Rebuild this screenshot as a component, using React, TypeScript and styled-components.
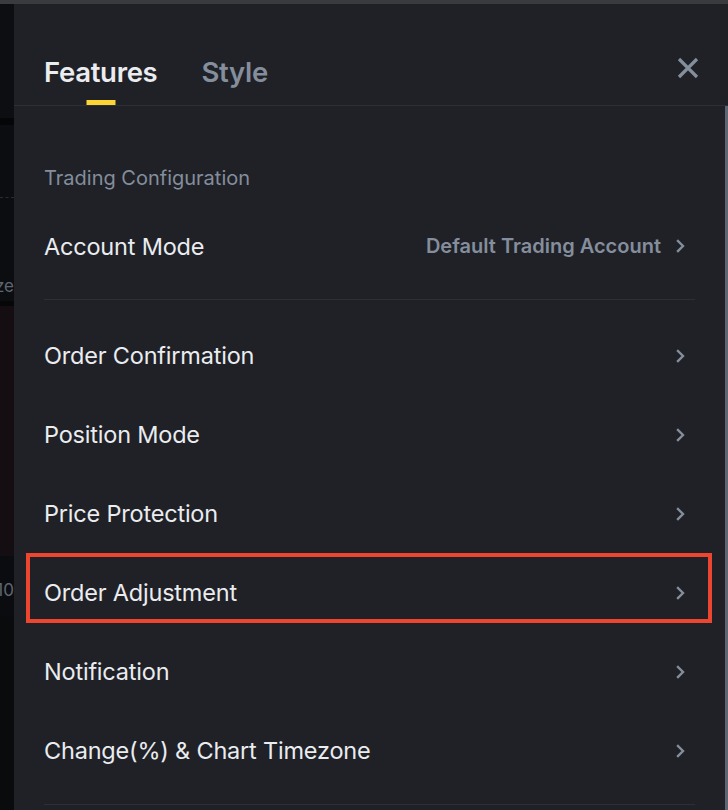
import styled, { createGlobalStyle } from "styled-components";

const GlobalStyle = createGlobalStyle`
  html, body {
    margin: 0;
    padding: 0;
    background: #0b0d10;
  }
  body {
    font-family: Inter, "Noto Sans", sans-serif;
    -webkit-font-smoothing: antialiased;
  }
`;

const Screen = styled.div`
  width: 728px;
  height: 810px;
  overflow: hidden;
  display: flex;
  flex-direction: column;
  background: #0b0d10;
`;

const TopStrip = styled.div`
  height: 4px;
  flex: none;
  background: #3a3b3e;
`;

const Main = styled.div`
  flex: 1;
  display: flex;
  min-height: 0;
`;

/* the page behind the drawer, only a sliver of it shows */
const Backdrop = styled.div`
  width: 14px;
  flex: none;
  display: flex;
  flex-direction: column;
  overflow: hidden;
`;

const BackBlock = styled.div<{ $h: number; $bg: string; $dotted?: boolean }>`
  height: ${(p) => p.$h}px;
  flex: none;
  background: ${(p) => p.$bg};
  border-bottom: ${(p) => (p.$dotted ? "1px dashed #2a2c30" : "none")};
  display: flex;
  justify-content: flex-end;
  align-items: flex-end;
  white-space: nowrap;
  font-size: 17px;
  color: #5e6673;
`;

const BackText = styled.span<{ $pad: number }>`
  padding-bottom: ${(p) => p.$pad}px;
  line-height: 20px;
`;

const Panel = styled.div`
  flex: 1;
  display: flex;
  flex-direction: column;
  background: #1f2127;
  min-width: 0;
`;

const Header = styled.div`
  height: 101px;
  flex: none;
  display: flex;
  align-items: flex-end;
  padding: 0 30px 0 30px;
  border-bottom: 1px solid #2b2f36;
`;

const Tabs = styled.div`
  display: flex;
  gap: 44px;
  flex: 1;
`;

const Tab = styled.div<{ $active?: boolean }>`
  position: relative;
  font-size: 27.5px;
  font-weight: 600;
  letter-spacing: -0.3px;
  line-height: 34px;
  padding-bottom: 16px;
  color: ${(p) => (p.$active ? "#eaecef" : "#848e9c")};

  &::after {
    content: "";
    display: ${(p) => (p.$active ? "block" : "none")};
    position: absolute;
    left: 50%;
    bottom: 0;
    transform: translateX(-50%);
    width: 29px;
    height: 5px;
    background: #fcd535;
  }
`;

const CloseButton = styled.button`
  border: none;
  background: none;
  padding: 0;
  margin-bottom: 25px;
  margin-right: -2px;
  width: 24px;
  height: 24px;
  display: flex;
  align-items: center;
  justify-content: center;
  cursor: pointer;
`;

const BodyWrap = styled.div`
  flex: 1;
  display: flex;
  min-height: 0;
`;

const Body = styled.div`
  flex: 1;
  padding: 0 30px;
  overflow: hidden;
`;

const Scrollbar = styled.div`
  width: 3px;
  flex: none;
  background: #5e6673;
`;

const SectionTitle = styled.div`
  padding-top: 56px;
  line-height: 32px;
  font-size: 20px;
  color: #848e9c;
`;

const Divider = styled.div<{ $top: number; $bottom: number }>`
  height: 1px;
  background: #2b2f36;
  margin: ${(p) => p.$top}px 0 ${(p) => p.$bottom}px;
`;

const Row = styled.div<{ $h: number; $highlight?: boolean }>`
  position: relative;
  height: ${(p) => p.$h}px;
  display: flex;
  align-items: center;
  padding-right: 10px;
  cursor: pointer;

  &::before {
    content: "";
    display: ${(p) => (p.$highlight ? "block" : "none")};
    position: absolute;
    top: 0;
    left: -18px;
    right: -17px;
    height: 70px;
    box-sizing: border-box;
    border: 4px solid #ec4530;
    pointer-events: none;
  }
`;

const Label = styled.div`
  flex: 1;
  font-size: 23.5px;
  color: #eaecef;
  letter-spacing: -0.2px;
`;

const Value = styled.div`
  font-size: 20px;
  font-weight: 600;
  color: #848e9c;
  margin-right: 15px;
`;

function Chevron() {
  return (
    <svg width="9" height="14" viewBox="0 0 9 14">
      <path
        d="M2 2l5 5-5 5"
        fill="none"
        stroke="#848e9c"
        strokeWidth="2.4"
        strokeLinecap="square"
      />
    </svg>
  );
}

const rows = [
  "Order Confirmation",
  "Position Mode",
  "Price Protection",
  "Order Adjustment",
  "Notification",
  "Change(%) & Chart Timezone",
];

export default function App() {
  return (
    <>
      <GlobalStyle />
      <Screen>
        <TopStrip />
        <Main>
          <Backdrop>
            <BackBlock $h={114} $bg="#0c0e11" />
            <BackBlock $h={7} $bg="#050607" />
            <BackBlock $h={72} $bg="#0c0d10" $dotted />
            <BackBlock $h={103} $bg="#0c0d10">
              <BackText $pad={5}>ze</BackText>
            </BackBlock>
            <BackBlock $h={5} $bg="#060708" />
            <BackBlock $h={250} $bg="#140e12" />
            <BackBlock $h={60} $bg="#0b0c0f">
              <BackText $pad={16}>10</BackText>
            </BackBlock>
            <BackBlock $h={200} $bg="#0a0b0d" />
          </Backdrop>
          <Panel>
            <Header>
              <Tabs>
                <Tab $active>Features</Tab>
                <Tab>Style</Tab>
              </Tabs>
              <CloseButton aria-label="Close">
                <svg width="22" height="22" viewBox="0 0 22 22">
                  <path
                    d="M2 2L20 20M20 2L2 20"
                    stroke="#848e9c"
                    strokeWidth="3.2"
                  />
                </svg>
              </CloseButton>
            </Header>
            <BodyWrap>
              <Body>
                <SectionTitle>Trading Configuration</SectionTitle>
                <Row $h={104}>
                  <Label>Account Mode</Label>
                  <Value>Default Trading Account</Value>
                  <Chevron />
                </Row>
                <Divider $top={1} $bottom={16} />
                {rows.map((r) => (
                  <Row key={r} $h={79} $highlight={r === "Order Adjustment"}>
                    <Label>{r}</Label>
                    <Chevron />
                  </Row>
                ))}
                <Divider $top={14} $bottom={0} />
              </Body>
              <Scrollbar />
            </BodyWrap>
          </Panel>
        </Main>
      </Screen>
    </>
  );
}
